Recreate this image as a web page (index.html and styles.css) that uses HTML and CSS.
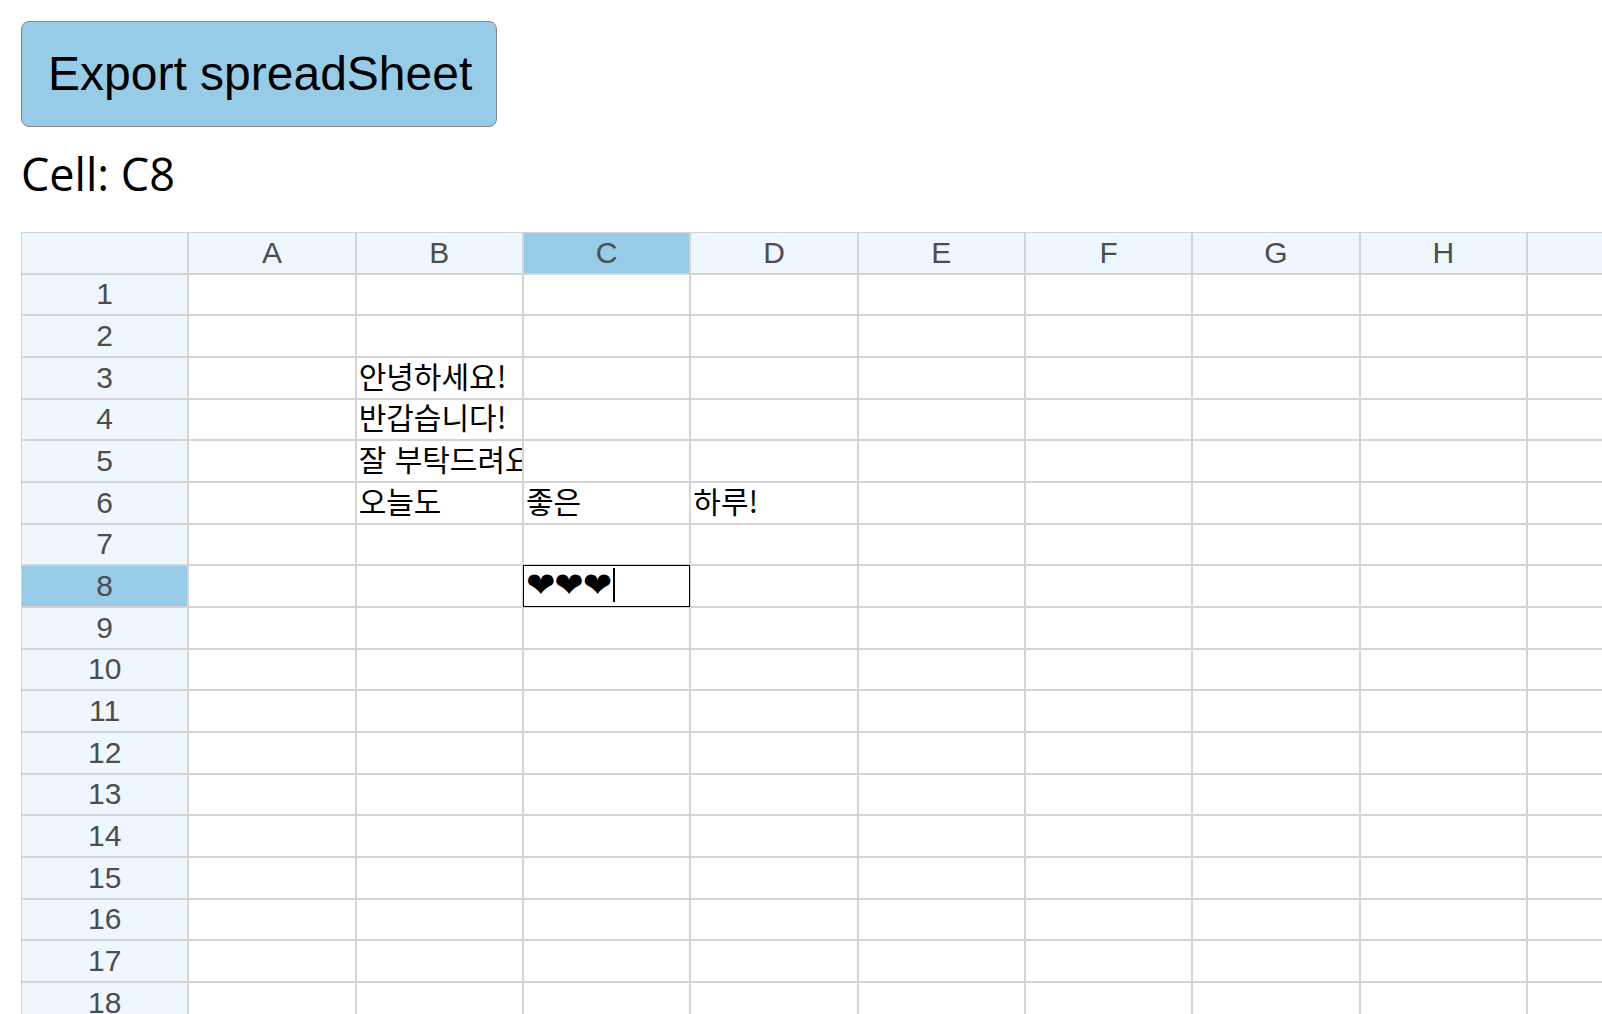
FILE: index.html
```html
<!DOCTYPE html>
<html lang="ko">
<head>
<meta charset="utf-8">
<title>Spreadsheet</title>
<link rel="stylesheet" href="styles.css">
</head>
<body>
<div class="page">
  <button class="export-btn" type="button">Export spreadSheet</button>
  <div class="cell-label">Cell: C8</div>
  <div class="sheet">
    <div class="c hd corner"></div>
    <div class="c hd">A</div><div class="c hd">B</div><div class="c hd sel">C</div><div class="c hd">D</div><div class="c hd">E</div><div class="c hd">F</div><div class="c hd">G</div><div class="c hd">H</div><div class="c hd">I</div><div class="c hd">J</div>

    <div class="c hd">1</div><div class="c"></div><div class="c"></div><div class="c"></div><div class="c"></div><div class="c"></div><div class="c"></div><div class="c"></div><div class="c"></div><div class="c"></div><div class="c"></div>
    <div class="c hd">2</div><div class="c"></div><div class="c"></div><div class="c"></div><div class="c"></div><div class="c"></div><div class="c"></div><div class="c"></div><div class="c"></div><div class="c"></div><div class="c"></div>
    <div class="c hd">3</div><div class="c"></div><div class="c tx">안녕하세요!</div><div class="c"></div><div class="c"></div><div class="c"></div><div class="c"></div><div class="c"></div><div class="c"></div><div class="c"></div><div class="c"></div>
    <div class="c hd">4</div><div class="c"></div><div class="c tx">반갑습니다!</div><div class="c"></div><div class="c"></div><div class="c"></div><div class="c"></div><div class="c"></div><div class="c"></div><div class="c"></div><div class="c"></div>
    <div class="c hd">5</div><div class="c"></div><div class="c tx">잘 부탁드려요</div><div class="c"></div><div class="c"></div><div class="c"></div><div class="c"></div><div class="c"></div><div class="c"></div><div class="c"></div><div class="c"></div>
    <div class="c hd">6</div><div class="c"></div><div class="c tx">오늘도</div><div class="c tx">좋은</div><div class="c tx">하루!</div><div class="c"></div><div class="c"></div><div class="c"></div><div class="c"></div><div class="c"></div><div class="c"></div>
    <div class="c hd">7</div><div class="c"></div><div class="c"></div><div class="c"></div><div class="c"></div><div class="c"></div><div class="c"></div><div class="c"></div><div class="c"></div><div class="c"></div><div class="c"></div>
    <div class="c hd sel">8</div><div class="c"></div><div class="c"></div><div class="c tx active"><span class="hearts">&#x2764;&#xFE0E;&#x2764;&#xFE0E;&#x2764;&#xFE0E;</span><span class="caret"></span></div><div class="c"></div><div class="c"></div><div class="c"></div><div class="c"></div><div class="c"></div><div class="c"></div><div class="c"></div>
    <div class="c hd">9</div><div class="c"></div><div class="c"></div><div class="c"></div><div class="c"></div><div class="c"></div><div class="c"></div><div class="c"></div><div class="c"></div><div class="c"></div><div class="c"></div>
    <div class="c hd">10</div><div class="c"></div><div class="c"></div><div class="c"></div><div class="c"></div><div class="c"></div><div class="c"></div><div class="c"></div><div class="c"></div><div class="c"></div><div class="c"></div>
    <div class="c hd">11</div><div class="c"></div><div class="c"></div><div class="c"></div><div class="c"></div><div class="c"></div><div class="c"></div><div class="c"></div><div class="c"></div><div class="c"></div><div class="c"></div>
    <div class="c hd">12</div><div class="c"></div><div class="c"></div><div class="c"></div><div class="c"></div><div class="c"></div><div class="c"></div><div class="c"></div><div class="c"></div><div class="c"></div><div class="c"></div>
    <div class="c hd">13</div><div class="c"></div><div class="c"></div><div class="c"></div><div class="c"></div><div class="c"></div><div class="c"></div><div class="c"></div><div class="c"></div><div class="c"></div><div class="c"></div>
    <div class="c hd">14</div><div class="c"></div><div class="c"></div><div class="c"></div><div class="c"></div><div class="c"></div><div class="c"></div><div class="c"></div><div class="c"></div><div class="c"></div><div class="c"></div>
    <div class="c hd">15</div><div class="c"></div><div class="c"></div><div class="c"></div><div class="c"></div><div class="c"></div><div class="c"></div><div class="c"></div><div class="c"></div><div class="c"></div><div class="c"></div>
    <div class="c hd">16</div><div class="c"></div><div class="c"></div><div class="c"></div><div class="c"></div><div class="c"></div><div class="c"></div><div class="c"></div><div class="c"></div><div class="c"></div><div class="c"></div>
    <div class="c hd">17</div><div class="c"></div><div class="c"></div><div class="c"></div><div class="c"></div><div class="c"></div><div class="c"></div><div class="c"></div><div class="c"></div><div class="c"></div><div class="c"></div>
    <div class="c hd">18</div><div class="c"></div><div class="c"></div><div class="c"></div><div class="c"></div><div class="c"></div><div class="c"></div><div class="c"></div><div class="c"></div><div class="c"></div><div class="c"></div>
  </div>
</div>
</body>
</html>
```

FILE: styles.css
```css
html, body {
  margin: 0;
  padding: 0;
  overflow: hidden;
  background: #ffffff;
}

.page {
  padding: 21px 0 0 21px;
}

.export-btn {
  display: block;
  box-sizing: border-box;
  margin: 0;
  padding: 24px 24px 25px 26px;
  font-family: "Liberation Sans", Arial, sans-serif;
  font-size: 48px;
  line-height: 55px;
  white-space: nowrap;
  color: #000;
  background: #97cce8;
  border: 1px solid #858585;
  border-radius: 8px;
  width: 476px;
  text-align: left;
}

.cell-label {
  margin: 15px 0 0 0;
  font-family: "Open Sans", "Noto Sans", sans-serif;
  font-size: 45px;
  line-height: 63px;
  height: 63px;
  color: #000;
}

.sheet {
  margin-top: 27px;
  display: grid;
  grid-template-columns: repeat(11, 167.333px);
  grid-auto-rows: 41.667px;
  width: max-content;
}

.c {
  box-sizing: border-box;
  border: 1px solid #d4d4d4;
  overflow: hidden;
  white-space: nowrap;
  background: #fff;
}

.hd {
  background: #eff7fe;
  color: #4d4d4d;
  font-family: "Liberation Sans", Arial, sans-serif;
  font-size: 30px;
  display: flex;
  align-items: center;
  justify-content: center;
}

.hd.sel {
  background: #97cce8;
}

.tx {
  font-family: "Noto Sans CJK KR", "Noto Sans", sans-serif;
  font-size: 30px;
  color: #000;
  display: flex;
  align-items: center;
  padding: 0 0 6px 2px;
}

.active {
  border-color: #000;
  padding-bottom: 2px;
}

.hearts {
  font-family: "DejaVu Sans", sans-serif;
  font-size: 35px;
  letter-spacing: -1px;
}

.caret {
  display: inline-block;
  width: 2px;
  height: 34px;
  background: #000;
  margin-left: 2px;
}
```
